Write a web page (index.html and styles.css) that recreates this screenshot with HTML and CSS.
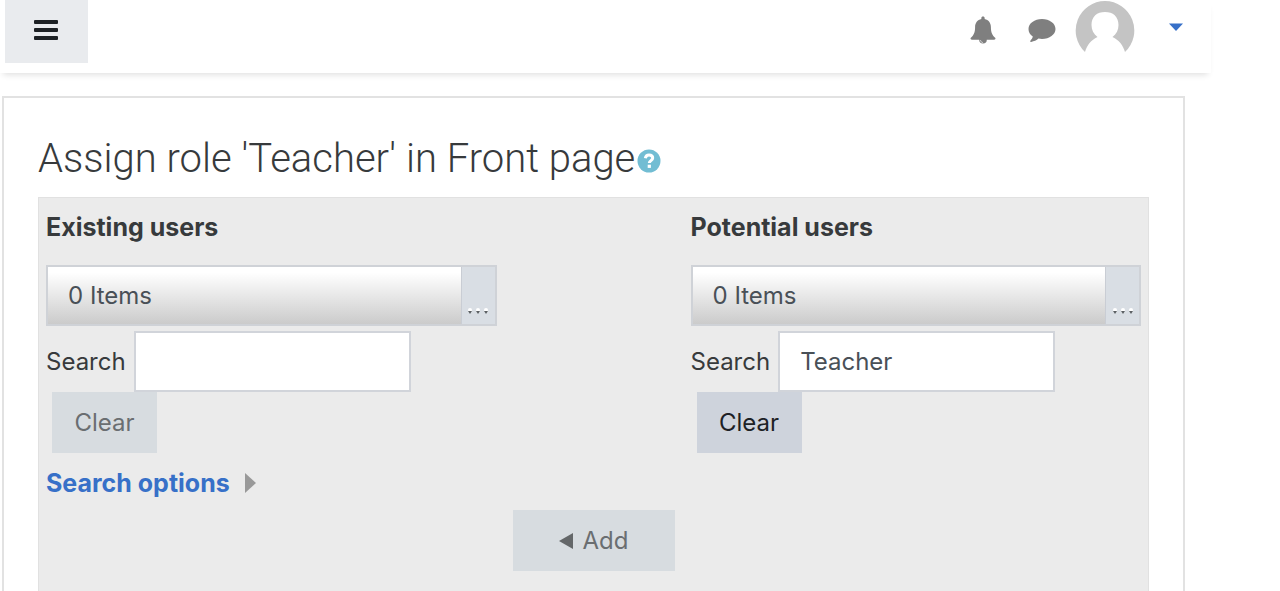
FILE: index.html
```html
<!DOCTYPE html>
<html lang="en">
<head>
<meta charset="utf-8">
<meta name="viewport" content="width=device-width, initial-scale=1">
<title>Assign role 'Teacher' in Front page</title>
<link rel="stylesheet" href="styles.css">
</head>
<body>
<header class="navbar">
  <button class="menu-toggle" type="button" aria-label="Side panel">
    <svg width="24" height="20" viewBox="0 0 24 20" aria-hidden="true"><g fill="#1d2125"><rect width="24" height="4" rx="1"/><rect y="8" width="24" height="4" rx="1"/><rect y="16" width="24" height="4" rx="1"/></g></svg>
  </button>
  <nav class="user-nav" aria-label="User">
    <button class="icon-button" type="button" aria-label="Notifications">
      <svg width="26" height="28" viewBox="0 0 26 28" aria-hidden="true"><path fill="#7f7f7f" d="M13 0.500c1 0 1.700.7 1.700 1.700l-.1.700c4 .8 6.300 3.800 6.300 8.200 0 5.400 1.400 8.500 4.500 11 .3 1-.4 1.700-1.300 1.700h-7.300a3.800 3.800 0 0 1-7.600 0H1.900c-.9 0-1.600-.7-1.300-1.700 3.100-2.500 4.500-5.600 4.500-11 0-4.400 2.300-7.400 6.300-8.200l-.1-.7c0-1 .7-1.700 1.700-1.700z"/><path d="M10.500 24c0 1.500 1 2.500 2.500 2.500" fill="none" stroke="#fff" stroke-width=".6"/></svg>
    </button>
    <button class="icon-button" type="button" aria-label="Messages">
      <svg width="28" height="24" viewBox="0 0 28 24" aria-hidden="true"><path fill="#7f7f7f" d="M14 1c7.500 0 13.500 4.400 13.500 10s-6 10-13.500 10c-1.200 0-2.400-.1-3.500-.4-2 2-4.500 2.800-7.300 3.300-.8.200-1.400-.5-.8-1.200 1.300-1.400 2-2.300 2.400-4.100C2 16.700.5 14 .5 11 .5 5.400 6.500 1 14 1z"/></svg>
    </button>
    <button class="user-menu" type="button" aria-label="User menu">
      <svg width="60" height="60" viewBox="0 0 60 60" aria-hidden="true"><path fill="#c4c4c4" d="M30 1a29.500 29.500 0 0 1 20 51c-2-7-6-12-12.500-15 4-3 6-7 6-12C43.500 16.500 38 12 30 12s-13.500 4.500-13.500 13c0 5 2 9 6 12C16 40 12 45 10 52A29.500 29.500 0 0 1 30 1z"/></svg>
      <svg class="caret" width="14" height="8" viewBox="0 0 14 8" aria-hidden="true"><path fill="#3770c8" d="M0 .500h14L7 8z"/></svg>
    </button>
  </nav>
</header>
<main class="card">
  <h1 class="title">Assign role 'Teacher' in Front page<button class="help" type="button" aria-label="Help with Assign role"><svg width="24" height="24" viewBox="0 0 24 24" aria-hidden="true"><circle cx="12" cy="12" r="11.500" fill="#72bdd3"/><path d="M8.300 9.200C8.800 6.800 10.200 6 12 6c2.200 0 3.700 1.200 3.700 3 0 2.500-3.400 2.700-3.400 5" fill="none" stroke="#fff" stroke-width="3"/><rect x="10.700" y="15.700" width="3.200" height="3.200" fill="#fff"/></svg></button></h1>
  <form class="assign">
    <section class="users">
      <label class="users-label" for="existing">Existing users</label>
      <div class="picker">
        <select class="picker-select" id="existing"><option>0 Items</option></select>
        <span class="picker-end"><svg width="22" height="6" viewBox="0 0 22 6" aria-hidden="true"><g fill="#fff"><circle cx="3" cy="2" r="2"/><circle cx="11" cy="2" r="2"/><circle cx="19" cy="2" r="2"/></g><g fill="#5c6064"><path d="M1 3h4L3 6zM9 3h4l-2 3zM17 3h4l-2 3z"/></g></svg></span>
      </div>
      <div class="search">
        <label for="existing-search">Search</label>
        <input class="search-input" id="existing-search" type="text">
      </div>
      <button class="button clear" type="button" disabled>Clear</button>
      <a class="options" href="#">Search options <svg width="12" height="22" viewBox="0 0 12 22" aria-hidden="true"><path fill="#999" d="M0 1l11 10L0 21z"/></svg></a>
    </section>
    <section class="users potential">
      <label class="users-label" for="potential">Potential users</label>
      <div class="picker">
        <select class="picker-select" id="potential"><option>0 Items</option></select>
        <span class="picker-end"><svg width="22" height="6" viewBox="0 0 22 6" aria-hidden="true"><g fill="#fff"><circle cx="3" cy="2" r="2"/><circle cx="11" cy="2" r="2"/><circle cx="19" cy="2" r="2"/></g><g fill="#5c6064"><path d="M1 3h4L3 6zM9 3h4l-2 3zM17 3h4l-2 3z"/></g></svg></span>
      </div>
      <div class="search">
        <label for="potential-search">Search</label>
        <input class="search-input" id="potential-search" type="text" value="Teacher">
      </div>
      <button class="button clear" type="button">Clear</button>
    </section>
    <button class="button add" type="submit" disabled><svg width="14" height="16" viewBox="0 0 14 16" aria-hidden="true"><path fill="#646769" d="M0 8l14-8v16z"/></svg>Add</button>
  </form>
</main>
</body>
</html>
```
FILE: styles.css
```css
* {
  box-sizing: border-box;
}

body {
  display: flex;
  flex-direction: column;
  min-height: 100vh;
  margin: 0;
  background: #fff;
  color: #373a3c;
  font: 24px/36px Inter, "Liberation Sans", sans-serif;
}

button,
input,
select {
  margin: 0;
  border: 0;
  border-radius: 0;
  font: inherit;
}

button {
  padding: 0;
  background: none;
}

svg {
  display: block;
}

.navbar {
  display: flex;
  justify-content: space-between;
  align-items: flex-start;
  height: 73px;
  margin-right: 69px;
  padding: 0 28px 0 5px;
  box-shadow: 0 5px 6px -3px rgba(0, 0, 0, 0.12);
}

.menu-toggle {
  display: grid;
  place-items: center;
  width: 83px;
  height: 63px;
  padding: 0 1px 3px 0;
  background: #e9ebee;
}

.user-nav {
  display: flex;
  align-items: center;
  gap: 32px;
  height: 60px;
}

.user-menu {
  display: flex;
  align-items: center;
  gap: 34px;
  margin-left: -13px;
}

.caret {
  margin-bottom: 6px;
}

.card {
  display: flex;
  flex: 1;
  flex-direction: column;
  margin: 23px 95px 0 2px;
  padding: 33px 34px 0;
  border: 2px solid #e2e2e2;
  border-bottom: 0;
}

.title {
  display: flex;
  align-items: center;
  gap: 2px;
  margin: 0 0 10px;
  font-family: Roboto, Inter, sans-serif;
  font-size: 40px;
  font-weight: 300;
  line-height: 56px;
}

.help {
  margin-top: 4px;
}

.assign {
  display: grid;
  flex: 1;
  grid-template-columns: 1fr 162px 1fr;
  grid-template-rows: auto 1fr;
  align-items: start;
  gap: 9px 16px;
  padding: 11px 7px;
  border: 1px solid #e1e1e1;
  border-bottom: 0;
  background: #ebebeb;
}

.users {
  display: flex;
  flex-direction: column;
  align-items: flex-start;
}

.potential {
  grid-column: 3;
}

.users-label {
  margin-bottom: 20px;
  font-size: 25px;
  font-weight: 700;
}

.picker {
  display: flex;
  width: 100%;
  height: 61px;
  margin-bottom: 5px;
  border: 2px solid #cfd2d7;
  background: linear-gradient(#fff 10%, #cbcbcb);
}

.picker-select {
  flex: 1;
  min-width: 0;
  padding: 0 20px;
  appearance: none;
  background: none;
  color: #495057;
}

.picker-end {
  display: flex;
  justify-content: center;
  align-items: flex-end;
  width: 34px;
  padding-bottom: 10px;
  border-left: 1px solid #c9cdd4;
  background: #d9dee4;
}

.search {
  display: flex;
  align-items: center;
  gap: 8px;
}

.search-input {
  width: 277px;
  height: 61px;
  padding: 0 20px;
  border: 2px solid #d1d4da;
  background: #fff;
  color: #495057;
}

.button {
  height: 61px;
  background: #ced3dc;
  color: #1d2125;
}

.button:disabled {
  background: #d7dce0;
  color: #6a6e71;
}

.clear {
  width: 105px;
  margin: 0 0 12px 6px;
}

.options {
  display: flex;
  align-items: center;
  gap: 15px;
  color: #3770c8;
  font-size: 25px;
  font-weight: 700;
  text-decoration: none;
}

.add {
  display: flex;
  grid-row: 2;
  grid-column: 2;
  justify-content: center;
  align-items: center;
  gap: 10px;
}
```
